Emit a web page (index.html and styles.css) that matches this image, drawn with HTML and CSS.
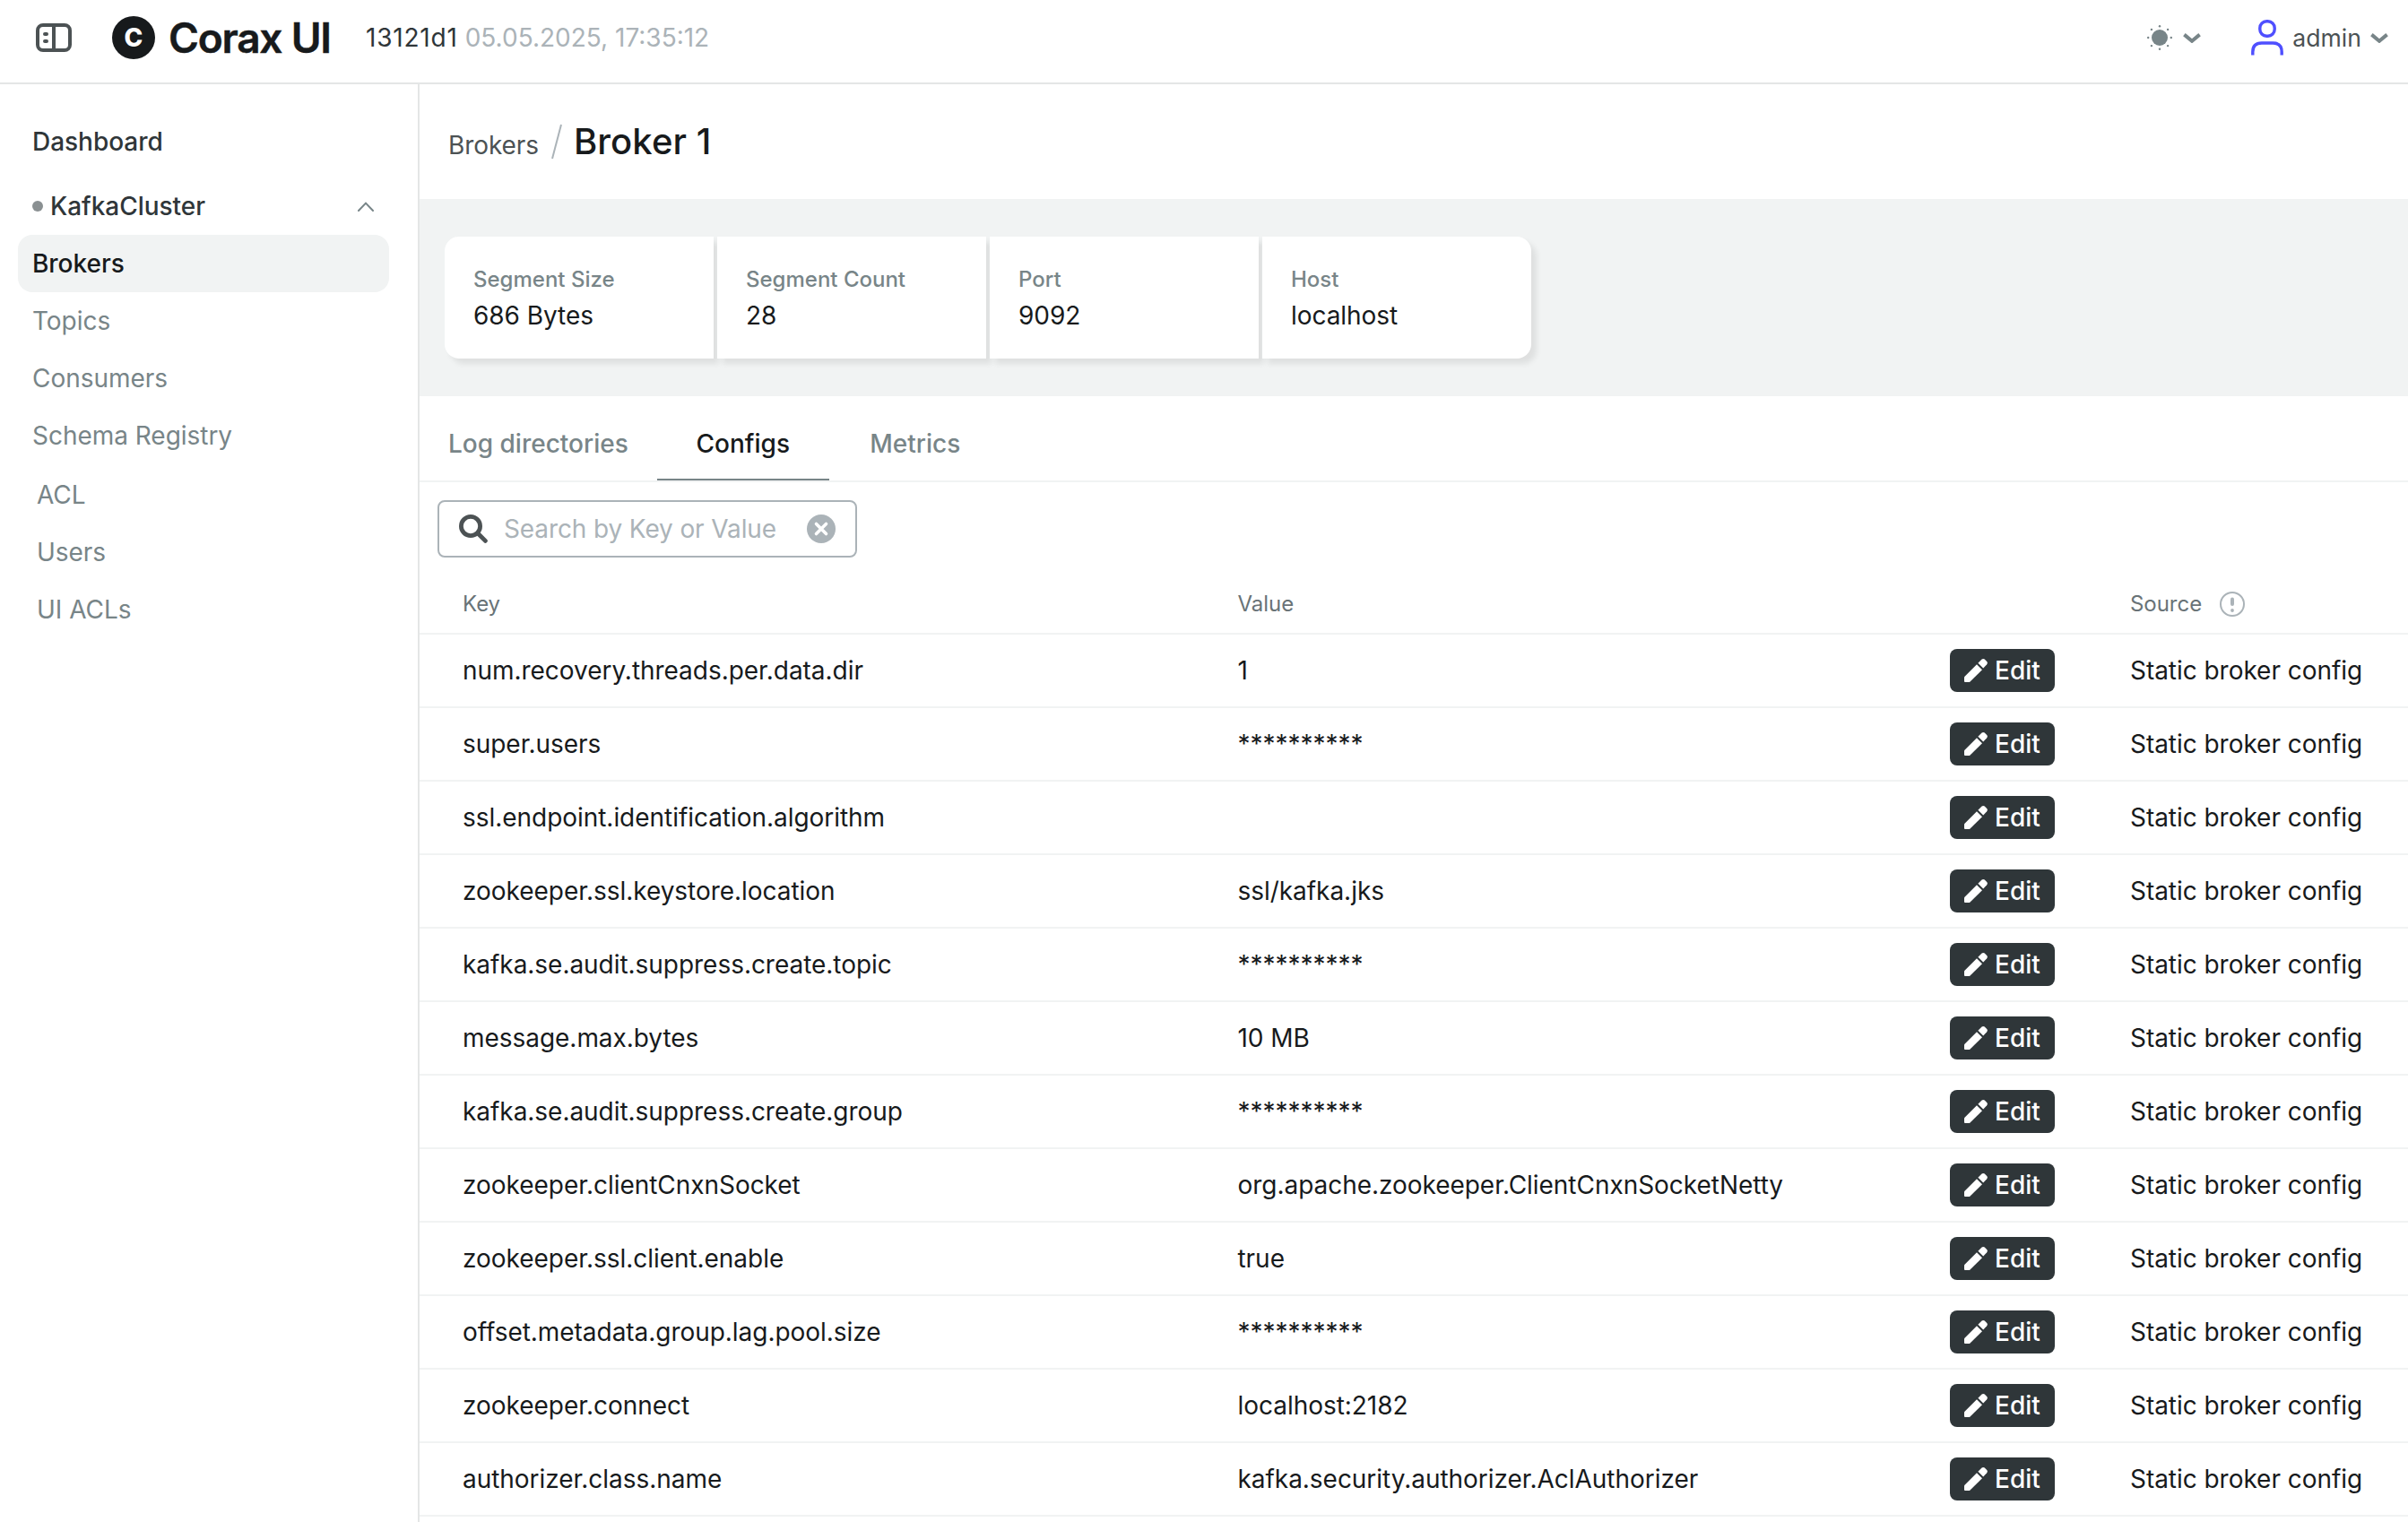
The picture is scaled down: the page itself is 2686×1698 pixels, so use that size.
FILE: index.html
```html
<!DOCTYPE html>
<html lang="en">
<head>
<meta charset="utf-8">
<title>Corax UI</title>
<link rel="stylesheet" href="styles.css">
</head>
<body>
<svg class="sprite" aria-hidden="true">
  <symbol id="pencil" viewBox="0 0 26 28">
    <path d="M0 21.2 14 7.2 20 13.2 6 27H1Q0 27 0 26Z"/>
    <path d="M15.4 5.8 19.6 1.6Q21.2 0.2 22.8 1.6L25.2 4Q26.6 5.6 25.2 7.2L21.2 11.4Z"/>
  </symbol>
</svg>
<header class="topbar">
  <svg class="toggle" viewBox="0 0 40 32"><rect x="2" y="2" width="36" height="28" rx="6"/><path d="M20 2V30"/><path class="marks" d="M10 12h2M10 20h2"/></svg>
  <a class="brand"><span class="logo">C</span><span class="name">Corax UI</span></a>
  <div class="version"><span class="commit">13121d1</span><span class="date">05.05.2025, 17:35:12</span></div>
  <div class="theme">
    <svg class="sun" viewBox="0 0 28 28"><circle cx="14" cy="14" r="9"/><circle cx="14" cy="1.2" r="1.2"/><circle cx="14" cy="26.8" r="1.2"/><circle cx="1.2" cy="14" r="1.2"/><circle cx="26.8" cy="14" r="1.2"/><circle cx="4.9" cy="4.9" r="1.2"/><circle cx="23.1" cy="4.9" r="1.2"/><circle cx="4.9" cy="23.1" r="1.2"/><circle cx="23.1" cy="23.1" r="1.2"/></svg>
    <svg class="chev" viewBox="0 0 20 11"><path d="M1.4 1.6 10 8.8 18.6 1.6"/></svg>
  </div>
  <div class="user">
    <svg class="person" viewBox="0 0 36 40"><rect x="9.8" y="1.8" width="16.4" height="16.4" rx="7.4"/><path d="M1.8 39.6V36Q1.8 26 11.8 26H24.2Q34.2 26 34.2 36V39.6"/></svg>
    <span>admin</span>
    <svg class="chev" viewBox="0 0 20 11"><path d="M1.4 1.6 10 8.8 18.6 1.6"/></svg>
  </div>
</header>
<div class="shell">
  <nav class="sidebar">
    <a class="item strong">Dashboard</a>
    <a class="item strong cluster"><i class="dot"></i><span>KafkaCluster</span><svg class="caret" viewBox="0 0 18 11"><path d="M1 10 9 1.6 17 10"/></svg></a>
    <a class="item active">Brokers</a>
    <a class="item">Topics</a>
    <a class="item">Consumers</a>
    <a class="item">Schema Registry</a>
    <div class="extra">
      <a class="item">ACL</a>
      <a class="item">Users</a>
      <a class="item">UI ACLs</a>
    </div>
  </nav>
  <main class="main">
    <div class="crumbs">
      <a class="parent">Brokers</a>
      <svg class="slash" viewBox="0 0 12 40"><path d="M11 1 1 39"/></svg>
      <h1>Broker 1</h1>
    </div>
    <section class="metrics">
      <div class="card"><span>Segment Size</span><b>686 Bytes</b></div>
      <div class="card"><span>Segment Count</span><b>28</b></div>
      <div class="card"><span>Port</span><b>9092</b></div>
      <div class="card"><span>Host</span><b>localhost</b></div>
    </section>
    <div class="tabs">
      <a class="tab">Log directories</a>
      <a class="tab current">Configs</a>
      <a class="tab">Metrics</a>
    </div>
    <div class="search">
      <svg viewBox="0 0 32 32" class="lens"><circle cx="13" cy="13" r="10.6"/><path d="M21 21 29.4 29.4"/></svg>
      <span>Search by Key or Value</span>
      <svg viewBox="0 0 32 32" class="clear"><circle cx="16" cy="16" r="16"/><path d="M10.5 10.5 21.5 21.5M21.5 10.5 10.5 21.5"/></svg>
    </div>
    <table class="configs">
      <colgroup><col class="c-key"><col class="c-value"><col class="c-edit"><col></colgroup>
      <thead>
        <tr><th>Key</th><th>Value</th><th></th><th><div class="source">Source<svg viewBox="0 0 28 28"><circle class="ring" cx="14" cy="14" r="13"/><path d="M14 8.4V14"/><circle class="point" cx="14" cy="21" r="1.9"/></svg></div></th></tr>
      </thead>
      <tbody>
        <tr><td>num.recovery.threads.per.data.dir</td><td>1</td><td><button class="edit"><svg><use href="#pencil"/></svg>Edit</button></td><td>Static broker config</td></tr>
        <tr><td>super.users</td><td>**********</td><td><button class="edit"><svg><use href="#pencil"/></svg>Edit</button></td><td>Static broker config</td></tr>
        <tr><td>ssl.endpoint.identification.algorithm</td><td></td><td><button class="edit"><svg><use href="#pencil"/></svg>Edit</button></td><td>Static broker config</td></tr>
        <tr><td>zookeeper.ssl.keystore.location</td><td>ssl/kafka.jks</td><td><button class="edit"><svg><use href="#pencil"/></svg>Edit</button></td><td>Static broker config</td></tr>
        <tr><td>kafka.se.audit.suppress.create.topic</td><td>**********</td><td><button class="edit"><svg><use href="#pencil"/></svg>Edit</button></td><td>Static broker config</td></tr>
        <tr><td>message.max.bytes</td><td>10 MB</td><td><button class="edit"><svg><use href="#pencil"/></svg>Edit</button></td><td>Static broker config</td></tr>
        <tr><td>kafka.se.audit.suppress.create.group</td><td>**********</td><td><button class="edit"><svg><use href="#pencil"/></svg>Edit</button></td><td>Static broker config</td></tr>
        <tr><td>zookeeper.clientCnxnSocket</td><td>org.apache.zookeeper.ClientCnxnSocketNetty</td><td><button class="edit"><svg><use href="#pencil"/></svg>Edit</button></td><td>Static broker config</td></tr>
        <tr><td>zookeeper.ssl.client.enable</td><td>true</td><td><button class="edit"><svg><use href="#pencil"/></svg>Edit</button></td><td>Static broker config</td></tr>
        <tr><td>offset.metadata.group.lag.pool.size</td><td>**********</td><td><button class="edit"><svg><use href="#pencil"/></svg>Edit</button></td><td>Static broker config</td></tr>
        <tr><td>zookeeper.connect</td><td>localhost:2182</td><td><button class="edit"><svg><use href="#pencil"/></svg>Edit</button></td><td>Static broker config</td></tr>
        <tr><td>authorizer.class.name</td><td>kafka.security.authorizer.AclAuthorizer</td><td><button class="edit"><svg><use href="#pencil"/></svg>Edit</button></td><td>Static broker config</td></tr>
      </tbody>
    </table>
  </main>
</div>
</body>
</html>
```
FILE: styles.css
```css
:root {
  --ink: #171a1c;
  --ink-soft: #2f3639;
  --muted: #788588;
  --faint: #abb3b8;
  --line: #e4e6e6;
  --line-soft: #f1f3f3;
}
* { box-sizing: border-box; }
body {
  margin: 0;
  height: 1698px;
  overflow: hidden;
  background: #fff;
  color: var(--ink);
  font: 400 28px/40px Inter, sans-serif;
}
svg { display: block; flex: none; fill: none; }
.sprite { width: 0; height: 0; position: absolute; }

.topbar {
  display: flex;
  align-items: center;
  height: 94px;
  padding: 0 22px 8px 40px;
  border-bottom: 2px solid var(--line);
}
.toggle { width: 40px; height: 32px; margin-right: 45px; stroke: #4c5254; stroke-width: 4; }
.toggle .marks { stroke-linecap: round; }
.brand { display: flex; align-items: center; gap: 15px; width: 283px; }
.logo {
  width: 48px;
  height: 48px;
  border-radius: 50%;
  background: var(--ink);
  color: #fff;
  font: 800 28px/48px Inter, sans-serif;
  text-align: center;
}
.name { font-size: 46px; font-weight: 600; letter-spacing: -1.2px; white-space: nowrap; -webkit-text-stroke: 0.5px var(--ink); }
.version { display: flex; gap: 8px; }
.commit { color: var(--ink-soft); letter-spacing: 0.8px; }
.date { color: var(--faint); }
.theme { display: flex; align-items: center; gap: 12px; margin-left: auto; }
.sun { width: 28px; height: 28px; fill: var(--muted); }
.chev { width: 20px; height: 11px; stroke: var(--muted); stroke-width: 4; }
.user { display: flex; align-items: center; margin-left: 56px; color: #4c5254; }
.person { width: 36px; height: 40px; margin-right: 10px; stroke: #4f4fff; stroke-width: 3.4; }
.user span { margin-right: 10px; font-size: 26.6px; }

.shell { display: flex; height: 1604px; }
.sidebar {
  display: flex;
  flex: none;
  flex-direction: column;
  width: 468px;
  padding: 32px 32px 0 20px;
  border-right: 2px solid var(--line);
}
.item {
  display: flex;
  align-items: center;
  height: 64px;
  padding: 0 16px;
  border-radius: 16px;
  color: var(--muted);
  letter-spacing: -0.03px;
}
.item.strong { color: var(--ink-soft); font-weight: 500; }
.item.cluster { margin-top: 8px; }
.item.active { background: var(--line-soft); color: var(--ink); font-weight: 500; }
.dot { width: 12px; height: 12px; margin-right: 8px; border-radius: 50%; background: #8a9092; }
.caret { width: 18px; height: 11px; margin: 0 1px 0 auto; stroke: var(--muted); stroke-width: 2; stroke-linecap: round; }
.extra { padding: 2px 0 0 5px; }

.main { flex: 1; min-width: 0; }
.crumbs { display: flex; height: 128px; padding: 43px 32px 0; }
.parent { margin: 5px 14px 0 0; color: #4c5254; letter-spacing: -0.1px; }
.slash { width: 12px; height: 40px; margin: 1px 13px 0 0; stroke: var(--faint); stroke-width: 2; }
h1 { margin: 0; font-size: 40px; font-weight: 500; line-height: 42px; letter-spacing: 0.1px; }
.metrics { display: flex; gap: 4px; height: 220px; padding: 42px 28px; background: #f1f3f3; }
.card {
  display: flex;
  flex-direction: column;
  justify-content: center;
  width: 300px;
  padding: 0 32px;
  background: #fff;
  box-shadow: 6px 6px 6px rgba(0, 0, 0, 0.08);
}
.card:first-child { border-radius: 16px 0 0 16px; }
.card:last-child { border-radius: 0 16px 16px 0; }
.card span { color: var(--muted); font-size: 24px; font-weight: 500; }
.card b { font-weight: 400; letter-spacing: -0.05px; }
.tabs { display: flex; height: 96px; border-bottom: 2px solid var(--line-soft); }
.tab {
  min-width: 192px;
  padding: 33px 32px 0;
  border-bottom: 2px solid transparent;
  color: var(--muted);
  font-weight: 500;
  text-align: center;
}
.tab.current { border-color: var(--muted); color: var(--ink); }
.search {
  display: flex;
  align-items: center;
  width: 468px;
  height: 64px;
  margin: 20px 0 18px 20px;
  padding: 0 22px;
  border: 2px solid var(--faint);
  border-radius: 8px;
  color: var(--faint);
}
.search span { flex: 1; padding-left: 18px; letter-spacing: -0.12px; }
.search svg { width: 32px; height: 32px; }
.lens { stroke: #4c5254; stroke-width: 4.8; stroke-linecap: round; }
.clear { fill: var(--faint); }
.clear path { stroke: #fff; stroke-width: 3.6; stroke-linecap: round; }

.configs { width: 100%; table-layout: fixed; border-collapse: separate; border-spacing: 0; }
.c-key { width: 864.5px; }
.c-value { width: 794.5px; }
.c-edit { width: 201px; }
.configs th, .configs td {
  height: 82px;
  padding: 0 0 0 48px;
  border-bottom: 2px solid var(--line-soft);
  text-align: left;
  vertical-align: middle;
  white-space: nowrap;
  letter-spacing: -0.04px;
}
.configs th { height: 68px; padding-top: 1px; color: #697377; font-size: 24px; font-weight: 400; }
.source { display: flex; align-items: center; gap: 20px; }
.source svg { width: 28px; height: 28px; stroke: var(--faint); stroke-width: 2; }
.source path { stroke-width: 4; stroke-linecap: round; }
.source .point { fill: var(--faint); stroke: none; }
.edit {
  display: flex;
  align-items: center;
  gap: 8px;
  height: 48px;
  padding: 0 16px;
  border: 0;
  border-radius: 8px;
  background: var(--ink-soft);
  color: #fff;
  font: 500 28px/40px Inter, sans-serif;
}
.edit svg { width: 26px; height: 28px; fill: #fff; }
```
